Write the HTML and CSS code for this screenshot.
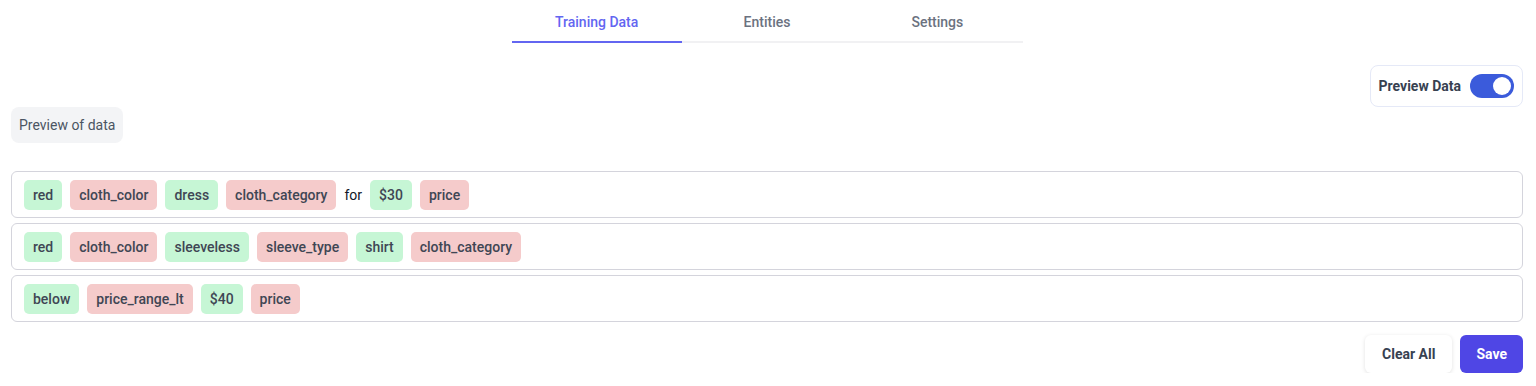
FILE: index.html
```html
<!DOCTYPE html>
<html lang="en">
<head>
    <meta charset="UTF-8" />
    <meta name="viewport" content="width=device-width, initial-scale=1.0" />
    <title>Training Data</title>
    <link rel="stylesheet" href="styles.css">
</head>
<body>

<div class="page">
    <!-- Tabs -->
    <nav class="tabs">
        <a class="tab active">Training Data</a>
        <a class="tab">Entities</a>
        <a class="tab">Settings</a>
    </nav>

    <!-- Preview toggle -->
    <div class="toolbar">
        <div class="preview-toggle">
            <span>Preview Data</span>
            <div class="switch on"><div class="knob"></div></div>
        </div>
    </div>

    <div class="preview-label">Preview of data</div>

    <!-- Annotated rows -->
    <div class="rows">
        <div class="row">
            <span class="tag value">red</span>
            <span class="tag entity">cloth_color</span>
            <span class="tag value">dress</span>
            <span class="tag entity">cloth_category</span>
            <span class="word">for</span>
            <span class="tag value">$30</span>
            <span class="tag entity">price</span>
        </div>
        <div class="row">
            <span class="tag value">red</span>
            <span class="tag entity">cloth_color</span>
            <span class="tag value">sleeveless</span>
            <span class="tag entity">sleeve_type</span>
            <span class="tag value">shirt</span>
            <span class="tag entity">cloth_category</span>
        </div>
        <div class="row">
            <span class="tag value">below</span>
            <span class="tag entity">price_range_lt</span>
            <span class="tag value">$40</span>
            <span class="tag entity">price</span>
        </div>
    </div>

    <div class="actions">
        <button class="btn btn-light">Clear All</button>
        <button class="btn btn-primary">Save</button>
    </div>
</div>

</body>
</html>
```

FILE: styles.css
```css
body {
    margin: 0;
    font-family: 'Roboto', 'Inter', sans-serif;
    background-color: #ffffff;
    color: #374151;
}
.page {
    padding: 0 13px 0 11px;
}
.tabs {
    display: flex;
    width: 511px;
    margin: 0 auto;
    padding-top: 14px;
    border-bottom: 2px solid #f1f1f3;
}
.tab {
    flex: 1;
    text-align: center;
    font-size: 14px;
    font-weight: 500;
    color: #6b7280;
    padding-bottom: 11px;
    margin-bottom: -2px;
    border-bottom: 2px solid transparent;
    cursor: pointer;
}
.tab.active {
    color: #6366f1;
    border-bottom-color: #6366f1;
}
.toolbar {
    display: flex;
    justify-content: flex-end;
    margin-top: 22px;
}
.preview-toggle {
    display: flex;
    align-items: center;
    gap: 9px;
    padding: 8px;
    border: 1px solid #e5e9f7;
    border-radius: 8px;
    font-size: 14px;
    font-weight: 700;
    color: #374151;
}
.switch {
    width: 44px;
    height: 24px;
    border-radius: 12px;
    background-color: #3b5bdb;
    display: flex;
    align-items: center;
    padding: 0 3px;
    box-sizing: border-box;
}
.switch.on {
    justify-content: flex-end;
}
.knob {
    width: 18px;
    height: 18px;
    border-radius: 50%;
    background-color: #ffffff;
}
.preview-label {
    display: inline-block;
    padding: 10px 8px;
    background-color: #f3f4f6;
    border-radius: 8px;
    font-size: 14px;
    color: #4b5563;
}
.rows {
    display: flex;
    flex-direction: column;
    gap: 5px;
    margin-top: 28px;
}
.row {
    display: flex;
    align-items: center;
    flex-wrap: wrap;
    gap: 8px;
    padding: 8px 12px 7px;
    border: 1px solid #d4d4dc;
    border-radius: 6px;
}
.tag {
    padding: 0 9px;
    height: 30px;
    line-height: 30px;
    border-radius: 5px;
    font-size: 14px;
    font-weight: 500;
    color: #3f4654;
}
.tag.value {
    background-color: #c6f6d5;
}
.tag.entity {
    background-color: #f5cbcb;
}
.word {
    font-size: 14px;
    color: #111827;
}
.actions {
    display: flex;
    justify-content: flex-end;
    gap: 8px;
    margin-top: 13px;
}
.btn {
    height: 38px;
    padding: 0 17px;
    border: none;
    border-radius: 6px;
    font-family: inherit;
    font-size: 14px;
    font-weight: 700;
    cursor: pointer;
}
.btn-light {
    background-color: #ffffff;
    color: #374151;
    box-shadow: 0 1px 4px rgba(0,0,0,0.12);
}
.btn-primary {
    background-color: #4f46e5;
    color: #ffffff;
    padding: 0 16px;
}
```
